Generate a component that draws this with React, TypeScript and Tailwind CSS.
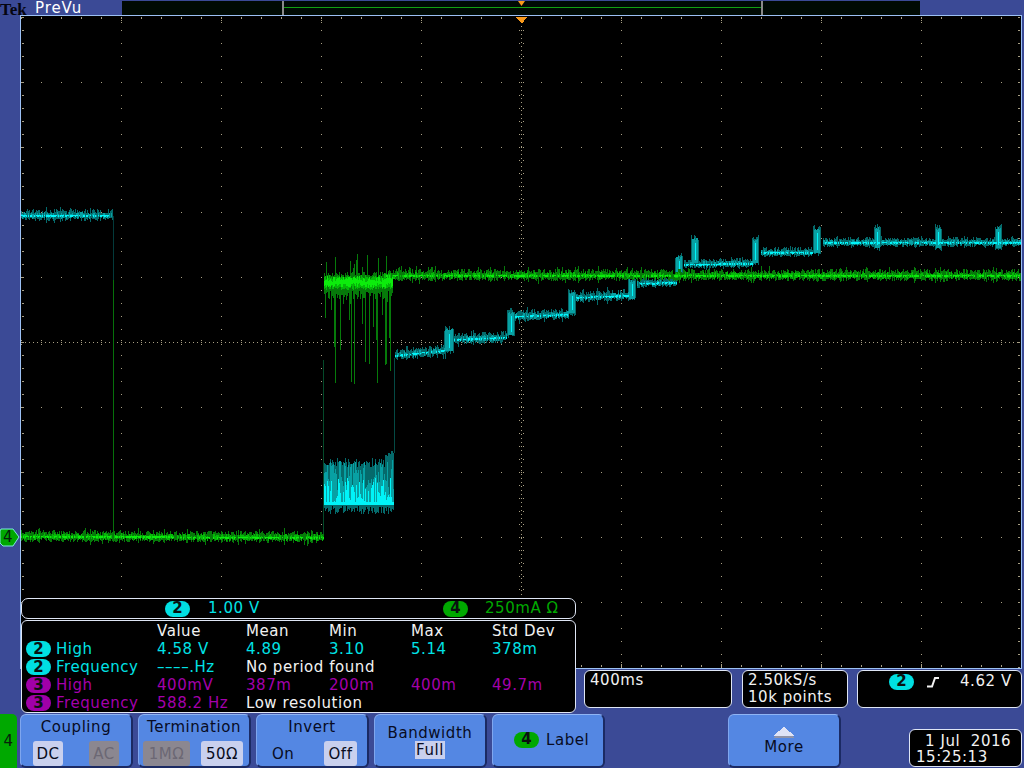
import React from "react";

// small seeded random so the traces come out the same on each render
let seed = 1234567;
const rnd = () => {
  seed = (seed + 0x6d2b79f5) | 0;
  let t = Math.imul(seed ^ (seed >>> 15), 1 | seed);
  t = (t + Math.imul(t ^ (t >>> 7), 61 | t)) ^ t;
  return ((t ^ (t >>> 14)) >>> 0) / 4294967296;
};
const between = (a: number, b: number) => a + rnd() * (b - a);
const col = (x: number, y1: number, y2: number) =>
  `M${x} ${Math.round(y1)}h1V${Math.round(y2)}h-1z`;

type Layers = { dim: string; mid: string; hi: string };
const newLayers = (): Layers => ({ dim: "", mid: "", hi: "" });

// noisy flat run of a trace
const band = (l: Layers, x0: number, x1: number, y0: number, y1: number, amp: number) => {
  for (let x = x0; x <= x1; x++) {
    const y = y0 + ((y1 - y0) * (x - x0)) / Math.max(1, x1 - x0);
    l.dim += col(x, y - between(1, amp + 2), y + between(2, amp + 2));
    if (rnd() < 0.7) l.mid += col(x, y - between(0, amp / 2 + 1), y + between(1, amp / 2 + 2));
    if (rnd() < 0.65) l.hi += col(x, y, y + between(1, 2.4));
    if (rnd() < 0.1) l.dim += col(x, y - between(amp, amp * 2.2), y + between(amp, amp * 2.2));
  }
};

// the little bump at each step of the staircase
const spike = (l: Layers, x0: number, x1: number, top: number, bot: number) => {
  for (let x = x0 - 1; x <= x1 + 1; x++) {
    l.dim += col(x, top + between(-3, 2), bot + between(0, 4));
    if (x >= x0 && x <= x1) l.mid += col(x, top + between(0, 3), bot + 1);
    if (x === Math.round((x0 + x1) / 2)) l.hi += col(x, top + 5, bot - 2);
  }
};

const cyan = newLayers();
band(cyan, 21, 112, 215, 215, 4);
band(cyan, 395, 445, 355, 350, 4);
spike(cyan, 445, 452, 329, 350);
band(cyan, 454, 506, 339, 337, 4);
spike(cyan, 508, 513, 311, 334);
band(cyan, 514, 568, 316, 314, 4);
spike(cyan, 569, 574, 291, 312);
band(cyan, 576, 628, 297, 295, 4);
spike(cyan, 629, 634, 279, 298);
band(cyan, 637, 676, 283, 282, 3);
spike(cyan, 676, 681, 256, 274);
band(cyan, 684, 752, 264, 263, 3);
spike(cyan, 692, 697, 238, 262);
spike(cyan, 753, 757, 238, 262);
band(cyan, 761, 812, 252, 252, 3);
spike(cyan, 814, 819, 228, 252);
band(cyan, 823, 1020, 242, 242, 3);
spike(cyan, 875, 879, 227, 247);
spike(cyan, 936, 940, 227, 247);
spike(cyan, 996, 1000, 227, 247);
// the burst while the output is collapsed
for (let x = 324; x <= 393; x++) {
  const top = x > 384 ? between(450, 456) : between(458, 468);
  cyan.dim += col(x, top, 505 + between(1, 9));
  cyan.mid += col(x, between(460, 494), 504);
  if (rnd() < 0.75) cyan.hi += col(x, between(478, 503), 505);
  else cyan.hi += col(x, 502, 505);
}

const green = newLayers();
band(green, 21, 323, 536, 537, 4);
for (let x = 324; x <= 392; x++) {
  green.dim += col(x, between(272, 277), between(290, 300));
  green.mid += col(x, between(275, 279), between(286, 290));
  green.hi += col(x, between(276, 282), between(283, 288));
  if (rnd() < 0.4) green.dim += col(x, 285, between(300, 385));
  if (rnd() < 0.1) green.dim += col(x, between(250, 275), 280);
}
band(green, 384, 1020, 275, 275, 4);

// grid dots, ticks and dotted centre lines
let gridDots = "";
const dot = (x: number, y: number, w = 1, h = 1) => {
  gridDots += `M${x} ${y}h${w}v${h}h${-w}z`;
};
for (let x = 21; x <= 1021; x += 20) {
  for (let y = 82; y <= 602; y += 65) if (y !== 342) dot(x + 0, y);
  dot(x, 17, 1, 2);
  dot(x, 665, 1, 2);
  dot(x, 340);
  dot(x, 344);
}
for (let y = 17; y <= 667; y += 13) {
  for (let x = 121; x <= 921; x += 100) if (x !== 521) dot(x, y);
  dot(22, y, 2, 1);
  dot(1018, y, 2, 1);
  dot(519, y);
  dot(523, y);
}
for (let x = 21; x <= 1021; x += 4) dot(x, 342);
for (let y = 18; y <= 667; y += 4) dot(521, y);
for (let x = 121; x <= 921; x += 100) {
  dot(x, 20);
  dot(x, 22);
  dot(x, 662);
  dot(x, 664);
}

const Plot = () => (
  <svg viewBox="21 16 1000 652" className="block h-[652px] w-[1000px]" shapeRendering="crispEdges">
    <path d={gridDots} fill="#a89f84" />
    <rect x="113" y="216" width="1" height="64" fill="#033a3a" />
    <rect x="113" y="280" width="1" height="255" fill="#06700a" />
    <rect x="323" y="360" width="1" height="175" fill="#044a2a" />
    <rect x="394" y="358" width="1" height="95" fill="#044a44" />
    <path d={cyan.dim} fill="#056a6b" />
    <path d={cyan.mid} fill="#08a0a3" />
    <path d={cyan.hi} fill="#00f4f8" />
    <path d={green.dim} fill="#067a0a" />
    <path d={green.mid} fill="#06b809" />
    <path d={green.hi} fill="#0cec0c" />
    <polygon points="516,17 527,17 522,24" fill="#f99a1c" />
  </svg>
);

const Badge = ({ n, color }: { n: number; color: "cyan" | "magenta" | "green" }) => {
  const bg =
    color === "cyan" ? "bg-[#00dfe2]" : color === "magenta" ? "bg-[#a000a8]" : "bg-[#00a800]";
  return (
    <span
      className={`inline-flex h-[16px] w-[25px] shrink-0 items-center justify-center rounded-full text-[15px] font-bold leading-none tracking-normal text-[#0a1010] ${bg}`}
    >
      {n}
    </span>
  );
};

const rows = [
  { n: 2, color: "cyan", label: "High", cells: ["4.58 V", "4.89", "3.10", "5.14", "378m"] },
  { n: 2, color: "cyan", label: "Frequency", value: "––––.Hz", note: "No period found" },
  { n: 3, color: "magenta", label: "High", cells: ["400mV", "387m", "200m", "400m", "49.7m"] },
  { n: 3, color: "magenta", label: "Frequency", value: "588.2 Hz", note: "Low resolution" },
] as const;

const Measurements = () => (
  <div className="absolute left-[21px] top-[620px] h-[93px] w-[555px] rounded-[6px] border border-[#dfe6f5] bg-black pl-[4px] pt-[1px] text-[15px] leading-[18px]">
    <div className="grid h-[18px] grid-cols-[131px_89px_83px_82px_81px_80px] text-[#f2f2f2]">
      <span />
      <span>Value</span>
      <span>Mean</span>
      <span>Min</span>
      <span>Max</span>
      <span>Std Dev</span>
    </div>
    {rows.map((r, i) => (
      <div
        key={i}
        className={`grid h-[18px] grid-cols-[131px_89px_83px_82px_81px_80px] ${
          r.color === "cyan" ? "text-[#00e2e6]" : "text-[#a400ac]"
        }`}
      >
        <span className="flex items-center gap-[5px]">
          <Badge n={r.n} color={r.color} />
          {r.label}
        </span>
        {"cells" in r ? (
          r.cells.map((c) => <span key={c}>{c}</span>)
        ) : (
          <>
            <span>{r.value}</span>
            <span className="col-span-4 text-[#f2f2f2]">{r.note}</span>
          </>
        )}
      </div>
    ))}
  </div>
);

const ChannelReadout = () => (
  <div className="absolute left-[21px] top-[598px] flex h-[21px] w-[555px] items-center rounded-[7px] border border-[#dfe6f5] bg-black pl-[143px] text-[15px]">
    <div className="flex w-[278px] items-center gap-[18px] text-[#00e2e6]">
      <Badge n={2} color="cyan" />
      <span>1.00 V</span>
    </div>
    <div className="flex items-center gap-[17px] text-[#00a800]">
      <Badge n={4} color="green" />
      <span>250mA Ω</span>
    </div>
  </div>
);

const StatusBox = ({ className, children }: { className: string; children: React.ReactNode }) => (
  <div
    className={`h-[38px] rounded-[6px] border border-[#dfe6f5] bg-black text-[15px] leading-[17px] text-[#f2f2f2] ${className}`}
  >
    {children}
  </div>
);

const Chip = ({ on, className, children }: { on: boolean; className: string; children: React.ReactNode }) => (
  <span
    className={`flex h-[25px] items-center justify-center rounded-[3px] ${
      on ? "bg-[#c9d0ee] text-[#080c20]" : "bg-[#8b8790] text-[#6c6874]"
    } ${className}`}
  >
    {children}
  </span>
);

const Softkey = ({ className, children }: { className?: string; children: React.ReactNode }) => (
  <div
    className={`h-[54px] w-[113px] shrink-0 rounded-[6px] border-b-2 border-l border-r-2 border-t border-b-[#1b2a63] border-l-[#7fa6ee] border-r-[#1b2a63] border-t-[#8fb4f4] bg-[#5487e3] text-[15px] leading-[18px] text-[#080c24] ${className ?? ""}`}
  >
    {children}
  </div>
);

const BottomBar = () => (
  <div className="flex h-[54px] items-start">
    <div className="flex h-[54px] w-[17px] items-center justify-center rounded-tr-[5px] bg-[#00a800] text-[15px] text-[#08200a]">
      4
    </div>
    <div className="ml-[3px] flex gap-[5px]">
      <Softkey>
        <div className="pt-[3px] text-center">Coupling</div>
        <div className="mt-[5px] flex justify-between px-[12px]">
          <Chip on className="w-[30px]">DC</Chip>
          <Chip on={false} className="w-[30px]">AC</Chip>
        </div>
      </Softkey>
      <Softkey>
        <div className="pt-[3px] text-center">Termination</div>
        <div className="mt-[5px] flex justify-between pl-[4px] pr-[6px]">
          <Chip on={false} className="w-[47px]">1MΩ</Chip>
          <Chip on className="w-[42px]">50Ω</Chip>
        </div>
      </Softkey>
      <Softkey>
        <div className="pt-[3px] text-center">Invert</div>
        <div className="mt-[5px] flex items-center justify-between pl-[15px] pr-[10px]">
          <span>On</span>
          <Chip on className="w-[33px]">Off</Chip>
        </div>
      </Softkey>
      <Softkey className="flex flex-col items-center pt-[9px]">
        <div>Bandwidth</div>
        <div className="mt-[-1px] bg-[#c9d0ee] px-[1px]">Full</div>
      </Softkey>
      <Softkey className="flex items-center gap-[7px] pb-[2px] pl-[21px]">
        <Badge n={4} color="green" />
        <span>Label</span>
      </Softkey>
    </div>
    <Softkey className="ml-[123px] flex flex-col items-center pt-[12px]">
      <svg width="24" height="12" viewBox="0 0 24 12" shapeRendering="crispEdges" className="block">
        <polygon points="12,0 23,9 1,9" fill="#dfe3f6" />
        <polygon points="4,9 20,9 23,11 1,11" fill="#8f93a8" />
      </svg>
      <span className="mt-[-1px]">More</span>
    </Softkey>
    <div className="ml-[68px] mt-[15px] h-[38px] w-[113px] rounded-[6px] border border-[#dfe6f5] bg-black pt-[3px] text-[15px] leading-[16px] text-[#f2f2f2]">
      <div className="whitespace-pre pl-[15px]">1 Jul  2016</div>
      <div className="pl-[6px]">15:25:13</div>
    </div>
  </div>
);

export default function App() {
  return (
    <div className="relative h-[768px] w-[1024px] overflow-hidden bg-[#3b4a96] tracking-[0.55px] [font-family:'DejaVu_Sans',sans-serif]">
      {/* header with record view */}
      <div className="flex h-[15px] items-start">
        <span className="relative z-10 w-[35px] shrink-0 text-[17px] font-bold leading-[20px] tracking-[0px] text-[#050510] [font-family:'Liberation_Serif',serif]">
          Tek
        </span>
        <span className="relative z-10 mt-[1px] w-[87px] shrink-0 text-[15px] leading-[15px] tracking-[0.9px] text-white">
          PreVu
        </span>
        <div className="relative mt-[1px] h-[14px] w-[798px] bg-[#000a04]">
          <div className="absolute left-[160px] top-[0px] h-[14px] w-[481px] border-x-2 border-[#8a8a8a]">
            <div className="mt-[6px] h-[1px] bg-[#12a012]" />
          </div>
          <svg width="7" height="5" viewBox="0 0 7 5" className="absolute left-[396px] top-0">
            <polygon points="0,0 7,0 3.5,5" fill="#f99a1c" />
          </svg>
        </div>
      </div>

      {/* graticule */}
      <div className="flex">
        <div className="w-[20px] shrink-0" />
        <div className="h-[654px] w-[1002px] border border-[#9cc0f4] bg-black">
          <Plot />
        </div>
      </div>

      {/* timebase, sample rate, trigger */}
      <div className="flex h-[45px] pl-[584px] pt-[1px]">
        <StatusBox className="w-[148px] pl-[5px] pt-[1px]">400ms</StatusBox>
        <StatusBox className="ml-[10px] w-[106px] pl-[5px] pt-[1px]">
          <div>2.50kS/s</div>
          <div>10k points</div>
        </StatusBox>
        <StatusBox className="ml-[9px] w-[165px] pl-[31px] pt-[2px]">
          <div className="flex items-center">
            <Badge n={2} color="cyan" />
            <svg width="14" height="12" viewBox="0 0 14 12" className="ml-[12px]">
              <path d="M1 10.5h5L9 2h4" fill="none" stroke="#f2f2f2" strokeWidth="2" />
            </svg>
            <span className="ml-[20px]">4.62 V</span>
          </div>
        </StatusBox>
      </div>

      <BottomBar />

      <ChannelReadout />
      <Measurements />

      {/* channel 4 ground marker */}
      <svg width="20" height="19" viewBox="0 0 20 19" className="absolute left-0 top-[528px]">
        <polygon points="1,1 13,1 19,9 13,18 3,18 0,15 0,3" fill="#00a800" stroke="#7fe8e0" strokeWidth="1" />
      </svg>
      <span className="absolute left-[3px] top-[529px] text-[15px] leading-[17px] text-[#06200a]">4</span>
    </div>
  );
}
